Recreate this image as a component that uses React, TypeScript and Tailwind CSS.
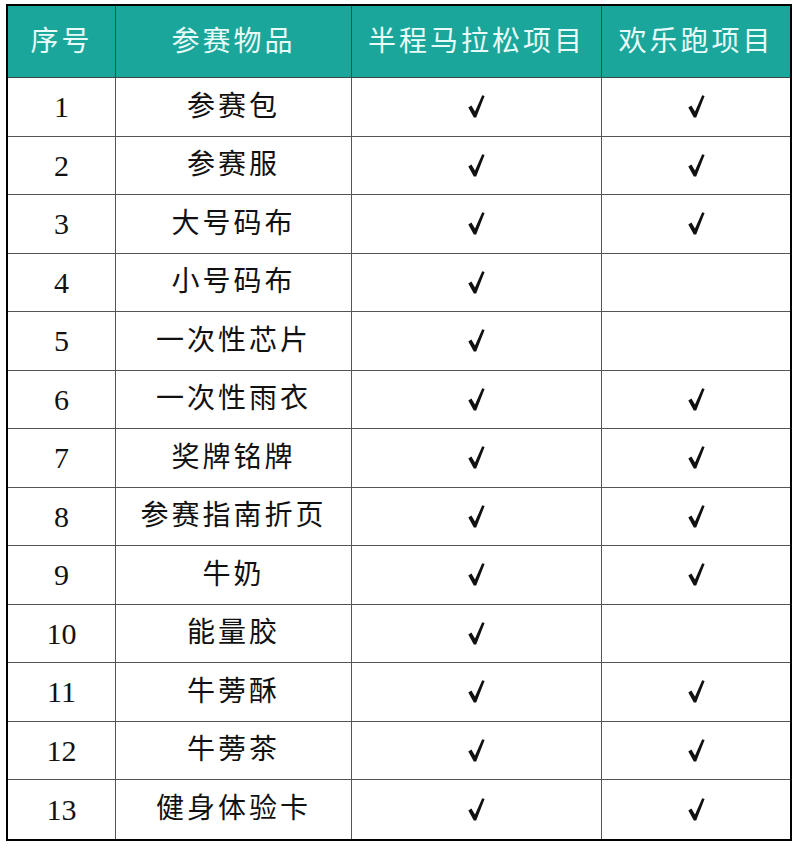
import React from 'react';

// 参赛物品清单
const items: { no: number; name: string; half: boolean; fun: boolean }[] = [
  { no: 1, name: '参赛包', half: true, fun: true },
  { no: 2, name: '参赛服', half: true, fun: true },
  { no: 3, name: '大号码布', half: true, fun: true },
  { no: 4, name: '小号码布', half: true, fun: false },
  { no: 5, name: '一次性芯片', half: true, fun: false },
  { no: 6, name: '一次性雨衣', half: true, fun: true },
  { no: 7, name: '奖牌铭牌', half: true, fun: true },
  { no: 8, name: '参赛指南折页', half: true, fun: true },
  { no: 9, name: '牛奶', half: true, fun: true },
  { no: 10, name: '能量胶', half: true, fun: false },
  { no: 11, name: '牛蒡酥', half: true, fun: true },
  { no: 12, name: '牛蒡茶', half: true, fun: true },
  { no: 13, name: '健身体验卡', half: true, fun: true },
];

const serif = { fontFamily: '"Liberation Serif", "Noto Sans CJK SC", serif' };

// 粗体对勾
function Check() {
  return (
    <svg width="17" height="23" viewBox="0 0 17 23" className="block">
      <path d="M0.3 12.6 L3.4 10.4 L7 16.4 L14.2 0.3 L16.6 1.1 L8.2 22.4 L5.8 22.4 Z" fill="#111" />
    </svg>
  );
}

export default function App() {
  return (
    <div className="w-[800px] h-[848px] bg-white pl-[6px] pt-[4px]" style={serif}>
      <div className="w-[786px] border-2 border-black grid grid-cols-[108px_236px_250px_188px] grid-rows-[72px_repeat(13,58.5px)]">
        {/* 表头 */}
        <div className="bg-[#1aa69b] text-[#e8fbf8] text-[28px] tracking-[3px] flex items-center justify-center border-r border-b border-[#3a4a48]">
          序号
        </div>
        <div className="bg-[#1aa69b] text-[#e8fbf8] text-[28px] tracking-[3px] flex items-center justify-center border-r border-b border-[#3a4a48]">
          参赛物品
        </div>
        <div className="bg-[#1aa69b] text-[#e8fbf8] text-[28px] tracking-[3px] flex items-center justify-center border-r border-b border-[#3a4a48]">
          半程马拉松项目
        </div>
        <div className="bg-[#1aa69b] text-[#e8fbf8] text-[28px] tracking-[3px] flex items-center justify-center border-b border-[#3a4a48]">
          欢乐跑项目
        </div>

        {items.map((it, i) => {
          const last = i === items.length - 1;
          const b = last ? '' : 'border-b';
          return (
            <React.Fragment key={it.no}>
              <div className={`flex items-center justify-center text-[30px] text-[#111] border-r border-[#555] ${b}`}>
                {it.no}
              </div>
              <div className={`flex items-center justify-center text-[28px] tracking-[3px] text-[#111] border-r border-[#555] ${b}`}>
                {it.name}
              </div>
              <div className={`flex items-center justify-center border-r border-[#555] ${b}`}>
                {it.half && <Check />}
              </div>
              <div className={`flex items-center justify-center border-[#555] ${b}`}>
                {it.fun && <Check />}
              </div>
            </React.Fragment>
          );
        })}
      </div>
    </div>
  );
}
